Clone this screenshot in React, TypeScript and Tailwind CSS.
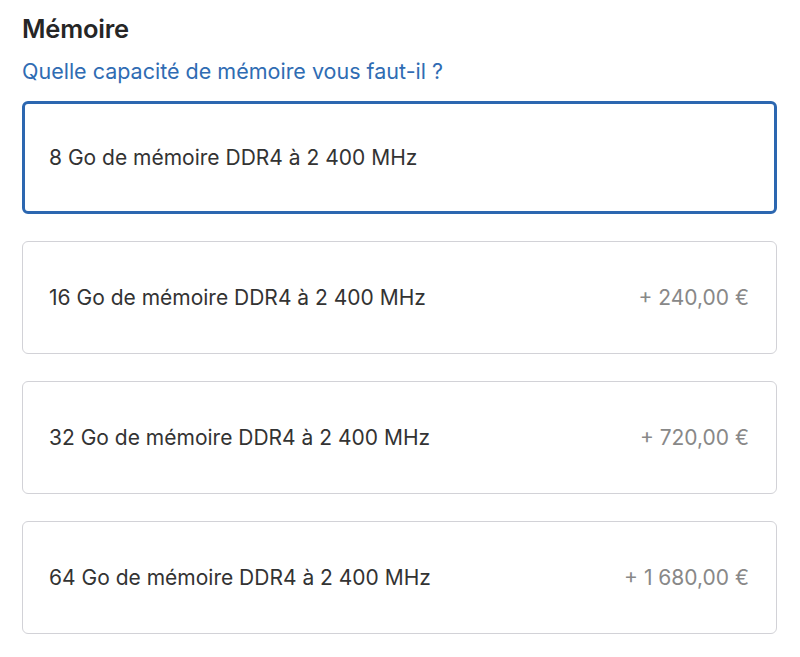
const options = [
  { label: '8 Go de mémoire DDR4 à 2 400 MHz', price: '', selected: true },
  { label: '16 Go de mémoire DDR4 à 2 400 MHz', price: '+ 240,00 €' },
  { label: '32 Go de mémoire DDR4 à 2 400 MHz', price: '+ 720,00 €' },
  { label: '64 Go de mémoire DDR4 à 2 400 MHz', price: '+ 1 680,00 €' },
];

export default function App() {
  return (
    <div className="min-h-[657px] bg-white px-[22px] pt-[13px] font-['Inter',sans-serif] text-[#1d1d1f]">
      <h2 className="text-[25.5px] font-semibold leading-[32px] tracking-[-0.2px] text-[#262626]">Mémoire</h2>
      <a className="mt-[12px] block text-[21.5px] leading-[28px] text-[#2f6cb3]">
        Quelle capacité de mémoire vous faut-il ?
      </a>
      <div className="mt-[16px] flex w-[755px] flex-col gap-[27px]">
        {options.map((o) => (
          <div
            key={o.label}
            className={
              o.selected
                ? 'flex h-[113px] items-center justify-between rounded-[6px] border-[3px] border-[#2c67b0] pl-[24px] pr-[25px]'
                : 'flex h-[113px] items-center justify-between rounded-[6px] border border-[#d2d2d7] pl-[26px] pr-[27px]'
            }
          >
            <span className="text-[21px] text-[#333]">{o.label}</span>
            <span className="text-[21px] text-[#888]">{o.price}</span>
          </div>
        ))}
      </div>
    </div>
  );
}
